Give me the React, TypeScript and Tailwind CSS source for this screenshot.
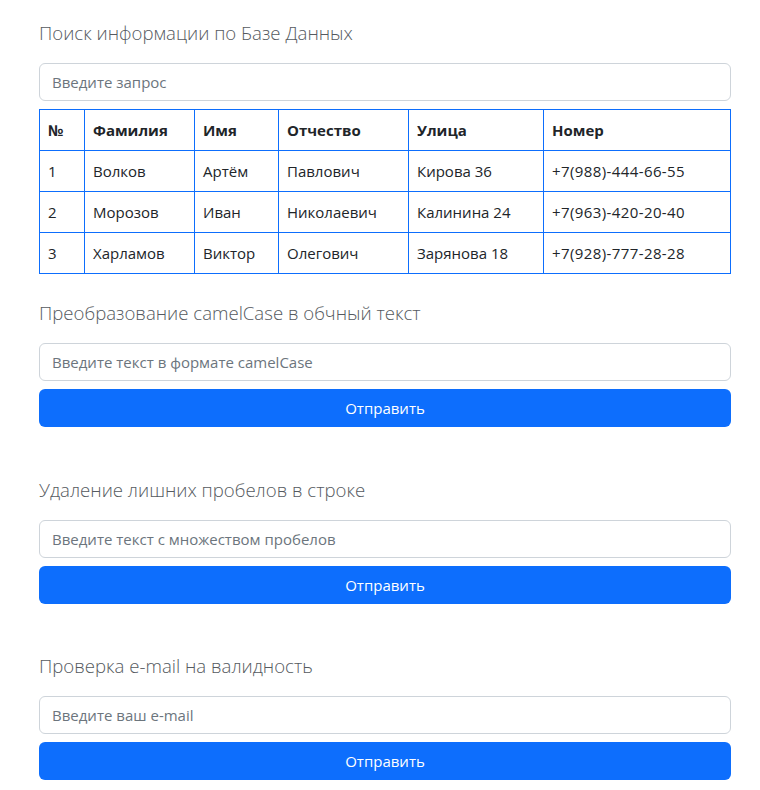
import { useState, type FC } from "react";

interface Person {
  id: number;
  surname: string;
  name: string;
  patronymic: string;
  street: string;
  phone: string;
}

const people: Person[] = [
  { id: 1, surname: "Волков", name: "Артём", patronymic: "Павлович", street: "Кирова 36", phone: "+7(988)-444-66-55" },
  { id: 2, surname: "Морозов", name: "Иван", patronymic: "Николаевич", street: "Калинина 24", phone: "+7(963)-420-20-40" },
  { id: 3, surname: "Харламов", name: "Виктор", patronymic: "Олегович", street: "Зарянова 18", phone: "+7(928)-777-28-28" },
];

const font = { fontFamily: '"Open Sans", "Noto Sans", sans-serif' };

const Heading: FC<{ text: string }> = ({ text }) => (
  <h5 className="text-[18.6px] leading-[30px] font-light text-[#555a60] mb-[15px]">{text}</h5>
);

const Field: FC<{ placeholder: string }> = ({ placeholder }) => {
  const [value, setValue] = useState("");
  return (
    <input
      value={value}
      onChange={(e) => setValue(e.target.value)}
      placeholder={placeholder}
      className="block w-full h-[38px] px-3 text-[15px] text-[#212529] placeholder:text-[#6c757d] border border-[#ced4da] rounded-[6px] outline-none"
    />
  );
};

const SubmitButton: FC = () => (
  <button className="mt-2 w-full h-[38px] rounded-[6px] bg-[#0d6efd] text-white text-[15px]">Отправить</button>
);

const cell = "border border-[#0d6efd] px-2 h-[41px] text-left align-middle";

export default function App() {
  return (
    <div className="bg-white min-h-[790px] text-[#212529]" style={font}>
      <div className="ml-[39px] w-[692px] pt-[18px]">
        {/* поиск */}
        <section>
          <Heading text="Поиск информации по Базе Данных" />
          <Field placeholder="Введите запрос" />
          <table className="mt-2 w-full table-fixed border-collapse text-[15px]">
            <colgroup>
              <col className="w-[45px]" />
              <col className="w-[110px]" />
              <col className="w-[84px]" />
              <col className="w-[130px]" />
              <col className="w-[135px]" />
              <col />
            </colgroup>
            <thead>
              <tr>
                {["№", "Фамилия", "Имя", "Отчество", "Улица", "Номер"].map((h) => (
                  <th key={h} className={cell + " font-bold"}>
                    {h}
                  </th>
                ))}
              </tr>
            </thead>
            <tbody>
              {people.map((p) => (
                <tr key={p.id}>
                  <td className={cell}>{p.id}</td>
                  <td className={cell}>{p.surname}</td>
                  <td className={cell}>{p.name}</td>
                  <td className={cell}>{p.patronymic}</td>
                  <td className={cell}>{p.street}</td>
                  <td className={cell + " tracking-[0.4px]"}>{p.phone}</td>
                </tr>
              ))}
            </tbody>
          </table>
        </section>

        {/* camelCase */}
        <section className="mt-[24px]">
          <Heading text="Преобразование camelCase в обчный текст" />
          <Field placeholder="Введите текст в формате camelCase" />
          <SubmitButton />
        </section>

        {/* пробелы */}
        <section className="mt-[48px]">
          <Heading text="Удаление лишних пробелов в строке" />
          <Field placeholder="Введите текст с множеством пробелов" />
          <SubmitButton />
        </section>

        {/* e-mail */}
        <section className="mt-[47px]">
          <Heading text="Проверка e-mail на валидность" />
          <Field placeholder="Введите ваш e-mail" />
          <SubmitButton />
        </section>
      </div>
    </div>
  );
}
